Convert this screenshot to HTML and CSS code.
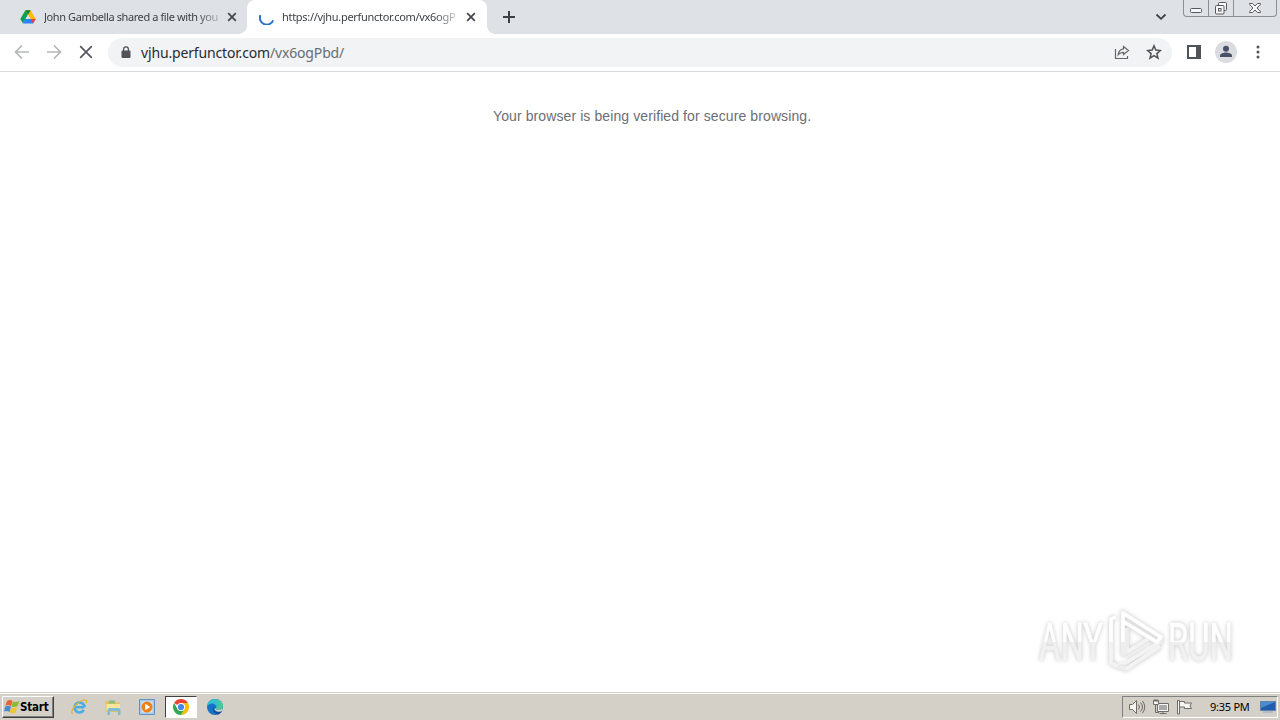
FILE: index.html
```html
<!DOCTYPE html>
<html lang="en">
<head>
<meta charset="utf-8">
<title>Browser window</title>
<link rel="stylesheet" href="styles.css">
</head>
<body>
<div class="desktop">
  <header class="tabstrip">
    <div class="tab">
      <svg class="favicon" width="16" height="16" viewBox="0 0 16 16"><path fill="#0f9d58" d="M5.4 1.3 8 5.8 3 14.5 .3 9.9z"/><path fill="#ffba00" d="M5.4 1.3h5.2l5.1 8.6h-5.2z"/><path fill="#2684fc" d="M5.4 9.9h10.3L13 14.5H3z"/><path fill="#ea4335" d="M10.5 9.9h5.2L13 14.5z"/><path fill="#00832d" d="M5.4 1.3h5.2L8 5.8z"/><path fill="#dee1e6" d="m8 5.800 2.500 4.100h-5z"/></svg>
      <span class="tab-title tab-title-first">John Gambella shared a file with you</span>
      <svg class="close" width="10" height="10" viewBox="0 0 10 10"><path d="m1.2 1.2 7.6 7.6m0-7.6L1.2 8.8"/></svg>
    </div>
    <div class="tab tab-active">
      <svg class="favicon" width="16" height="16" viewBox="0 0 16 16"><path d="M1.4 6.1a6.8 6.8 0 0 0 12.8 5.3" fill="none" stroke="#2b6fc9" stroke-width="2"/></svg>
      <span class="tab-title tab-title-second">https://vjhu.perfunctor.com/vx6ogP</span>
      <svg class="close" width="10" height="10" viewBox="0 0 10 10"><path d="m1.2 1.2 7.6 7.6m0-7.6L1.2 8.8"/></svg>
    </div>
    <svg class="new-tab" width="14" height="14" viewBox="0 0 14 14"><path d="M7 1v12M1 7h12"/></svg>
    <svg class="tab-search" width="12" height="8" viewBox="0 0 12 8"><path d="m1.5 1.5 4.5 4.3 4.5-4.3"/></svg>
    <div class="window-controls">
      <span class="control control-min"><svg width="14" height="16" viewBox="0 0 14 16"><rect x="1.500" y="8.500" width="11" height="4" rx="1"/></svg></span>
      <span class="control control-restore"><svg width="14" height="16" viewBox="0 0 14 16"><path d="M4.500 5V3.500q0-1 1-1h6q1 0 1 1v6q0 1-1 1H10"/><rect x="1.500" y="5.500" width="8.500" height="8.500" rx="1"/><rect x="4.500" y="8.500" width="2.500" height="2.500"/></svg></span>
      <span class="control control-close"><svg width="14" height="16" viewBox="0 0 14 16"><path d="M1.500 3.500h3L7 6l2.500-2.500h3v1L9 8l3.500 3.500v1h-3L7 10l-2.500 2.500h-3v-1L5 8 1.500 4.500z"/></svg></span>
    </div>
  </header>
  <nav class="toolbar">
    <svg class="nav-icon nav-disabled" width="16" height="16" viewBox="0 0 16 16"><path d="M15 8H2M8 1.500 1.500 8 8 14.500"/></svg>
    <svg class="nav-icon nav-disabled" width="16" height="16" viewBox="0 0 16 16"><path d="M1 8h13M8 1.500 14.500 8 8 14.500"/></svg>
    <svg class="nav-icon" width="16" height="16" viewBox="0 0 16 16"><path d="m2.200 2.200 11.600 11.600m0-11.600L2.200 13.800"/></svg>
    <div class="omnibox">
      <svg class="lock" width="10" height="13" viewBox="0 0 10 13"><path d="M2.600 5V3.300a2.400 2.400 0 0 1 4.800 0V5" fill="none" stroke="#505357" stroke-width="1.300"/><rect x=".5" y="4.600" width="9" height="7.400" rx="1" fill="#505357"/></svg>
      <span class="url">vjhu.perfunctor.com<span class="url-path">/vx6ogPbd/</span></span>
      <svg class="share" width="16" height="16" viewBox="0 0 16 16"><path d="M1.500 5v9.500h12V12M9.500 2.500l5 4-5 4V8.300c-2.300 0-4 .6-5.300 2.300.4-3.300 2-5.400 5.300-5.800z"/></svg>
      <svg class="star" width="16" height="16" viewBox="0 0 16 16"><path d="m8 1.800 1.800 4.300 4.600.4-3.500 3.100 1.100 4.600L8 11.700l-4 2.500 1.100-4.600-3.500-3.100 4.600-.4z"/></svg>
    </div>
    <svg class="side-panel" width="14" height="14" viewBox="0 0 14 14"><path d="M1 1h12v12H1z" fill="none" stroke="#505357" stroke-width="2"/><path d="M9 1h4v12H9z" fill="#505357"/></svg>
    <svg class="avatar" width="22" height="22" viewBox="0 0 22 22"><circle cx="11" cy="11" r="11" fill="#dadce0"/><circle cx="11" cy="7.800" r="3" fill="#465067"/><path d="M5 16v-1.500c0-2 3.700-3 6-3s6 1 6 3V16z" fill="#465067"/></svg>
    <svg class="kebab" width="4" height="16" viewBox="0 0 4 16"><circle cx="2" cy="3" r="1.500"/><circle cx="2" cy="8" r="1.500"/><circle cx="2" cy="13" r="1.500"/></svg>
  </nav>
  <main class="page">
    <p class="message">Your browser is being verified for secure browsing.</p>
    <svg class="watermark" width="210" height="76" viewBox="0 0 210 76">
      <defs><linearGradient id="shade" gradientUnits="userSpaceOnUse" x1="0" y1="20" x2="0" y2="60"><stop offset="0" stop-color="#fff"/><stop offset=".54" stop-color="#fefefe"/><stop offset=".55" stop-color="#efefef"/><stop offset="1" stop-color="#f3f3f3"/></linearGradient></defs>
      <g class="mark-text"><text x="11" y="59.500" textLength="64" lengthAdjust="spacingAndGlyphs">ANY</text><text x="140" y="59.500" textLength="65" lengthAdjust="spacingAndGlyphs">RUN</text></g>
      <g class="mark-shadow"><path d="M88 17l-5 2v44l6 3M95 56V13l38 24v5L99 62M96 22l32 20M99 28v24l21-13M89 63v3l9 3 34-22"/></g>
      <path class="mark-line mark-low" d="M83 40v23l6 3M99 52l21-13M90 63l9-1 32-20M98 69l34-23"/>
      <path class="mark-line" d="M88 17l-5 2v23M95 42V13l38 24-4 5-33-20"/>
    </svg>
  </main>
  <footer class="taskbar">
    <div class="start">
      <svg width="17" height="16" viewBox="0 0 17 16"><path fill="#e66532" d="M3 2q3-2 5.500 0L7 7.200Q4 5 1.200 7z"/><path fill="#8db93a" d="M9 2.500q3 1.200 6.500-.6l-1.800 5q-3 2-6.200.5z"/><path fill="#4a8bd0" d="M1 7.800q3-2 6 0L5.500 13q-2.500-2-5.300-.4z"/><path fill="#f3c52f" d="M7.300 8.200q3 1.700 6.200-.3l-2 5.500q-3 1.800-5.800.2z"/></svg>
      <span class="start-label">Start</span>
    </div>
    <div class="launchers">
      <span class="launcher"><svg width="18" height="18" viewBox="0 0 18 18"><path d="M14 9.200H5M13.800 12a5 5 0 1 1 .7-2.500" fill="none" stroke="#49aee2" stroke-width="2.600"/><path d="M2.500 16C-.5 13 8 2.500 15 1.800c2 0 1.800 2 1 3.400" fill="none" stroke="#dfb53c" stroke-width="1.300"/></svg></span>
      <span class="launcher"><svg width="18" height="18" viewBox="0 0 18 18"><path d="M1.500 3h5l1 1.500H16V14H1.500z" fill="#e2c260"/><path d="M2.500 6H16v7H2.500z" fill="#f9e69b"/><path d="M5 2.500h6v3H5z" fill="#8dbc7c"/><path d="M3.500 17v-5q0-2 2-2h9q2 0 2 2v5H14v-4H6v4z" fill="#7dbcd8"/></svg></span>
      <span class="launcher"><svg width="18" height="18" viewBox="0 0 18 18"><path d="M1.500 1.500h15v15h-15z" fill="#a9cae9" stroke="#5c94c8"/><path d="M3.500 3.500h11v11h-11z" fill="#d7e8f7"/><circle cx="9" cy="9" r="5.500" fill="#ee8119"/><path d="m7.200 5.800 5 3.200-5 3.200z" fill="#fff"/></svg></span>
      <span class="launcher launcher-active"><svg width="18" height="18" viewBox="0 0 18 18"><path fill="#ea4335" d="M9 9 2.070 5A8 8 0 0 1 15.930 5H9z"/><path fill="#fbbc04" d="M9 5h6.930A8 8 0 0 1 9 17l3.460-6z"/><path fill="#34a853" d="M9 17A8 8 0 0 1 2.070 5l3.470 6L9 13l3.460-2z"/><circle cx="9" cy="9" r="4" fill="#fff"/><circle cx="9" cy="9" r="3.100" fill="#4285f4"/></svg></span>
      <span class="launcher"><svg width="18" height="18" viewBox="0 0 18 18"><circle cx="9" cy="9" r="8" fill="#1672c5"/><path d="M1 8.500C1.600 3.500 5 1 9 1c5 0 8 3.500 8 7 0 3-2.500 4-4.500 4-3 0-3-1-2.300-2C11 8 9 5.500 6 5.500 3.500 5.500 1.500 7 1 8.500z" fill="#35bfcd"/><path d="M11 1.300c4 .7 6 3.500 6 6.700 0 3-2.500 4-4.500 4-3 0-3-1-2.300-2 2-1 3-5 .8-8.700z" fill="#5fd06f" opacity=".5"/><path d="M8 8c-1 3 1 6 4 6 2 0 3-.5 4.300-1.300-.7 1.500-2.300 3-4.300 3.700C8 16 5.500 12 8 8z" fill="#0b4d99"/><path d="M10 10c-.8 1 0 2 2.500 2 1.900 0 3.300-.8 4-2l-.2 2.700C14 14.500 9 14 8.500 11z" fill="#d4d0c8"/></svg></span>
    </div>
    <div class="tray">
      <svg width="18" height="16" viewBox="0 0 18 16"><path class="tray-fill" d="M1.500 5.500h3l4-4v13l-4-4h-3z"/><path class="tray-line" d="M10.500 5.500q2 2.500 0 5M12.500 3.500q4 4.500 0 9M14.500 2q4.500 6 0 12"/></svg>
      <svg width="18" height="16" viewBox="0 0 18 16"><path class="tray-fill" d="M5.500 4.500h11v8h-11zM7.500 14.500h7"/><path d="M7 6h8v5H7z" fill="#aaa"/><path class="tray-fill" d="M1.500 1.500h5v4h-5z"/><path class="tray-line" d="M3 0v3m2-3v3M3.500 5.500v8H7M11 12.500v2"/></svg>
      <svg width="18" height="16" viewBox="0 0 18 16"><path class="tray-fill" d="M1.500 15V1.500h2V15zM3.500 2.500h5v1.500h7l-1.500 3 1.500 2.500h-7V8h-5z"/></svg>
      <span class="clock">9:35 PM</span>
      <svg class="show-desktop" width="16" height="14" viewBox="0 0 16 14"><path d="M.5 1.500h15v9H.5z" fill="#225cae" stroke="#6085aa"/><path d="M1 2h14L1 8z" fill="#4b8bd1"/><path d="M3 12h10" stroke="#8fa9c4" stroke-width="1"/></svg>
    </div>
  </footer>
</div>
</body>
</html>
```
FILE: styles.css
```css
* { box-sizing: border-box; }
body { margin: 0; overflow: hidden; background: #fff; }
svg { display: block; flex: none; }
.desktop { width: 1280px; height: 720px; display: flex; flex-direction: column; font-family: "Noto Sans", sans-serif; }
.tabstrip { height: 34px; flex: none; display: flex; align-items: flex-start; background: #dee1e6; }
.tab { height: 34px; width: 247px; flex: none; display: flex; align-items: center; padding: 0 10px 0 20px; }
.tab-active { width: 240px; padding: 0 11px 0 12px; background: #fff; border-radius: 8px 8px 0 0; position: relative; }
.tab-active::before, .tab-active::after { content: ""; position: absolute; bottom: 0; width: 8px; height: 8px; }
.tab-active::before { left: -8px; background: radial-gradient(circle at 0 0, transparent 7.500px, #fff 8px); }
.tab-active::after { right: -8px; background: radial-gradient(circle at 100% 0, transparent 7.500px, #fff 8px); }
.tab-title { flex: none; width: 175px; margin: 0 8px; white-space: nowrap; font-size: 11px; line-height: 18px; color: #3c3f44; -webkit-mask-image: linear-gradient(90deg, #000 87%, rgba(0,0,0,.25)); mask-image: linear-gradient(90deg, #000 87%, rgba(0,0,0,.25)); }
.tab-title-first { letter-spacing: -.4px; }
.tab-title-second { margin: 0 9px 0 7px; letter-spacing: -.3px; }
.close { fill: none; stroke: #46494d; stroke-width: 1.800; }
.new-tab { margin: 10px 0 0 15px; fill: none; stroke: #3c4043; stroke-width: 2; }
.tab-search { margin: 13px 16px 0 auto; fill: none; stroke: #3c4043; stroke-width: 1.800; }
.window-controls { height: 17px; width: 94px; display: flex; margin-right: 3px; border: 1px solid #8b8e93; border-top: 0; border-radius: 0 0 4px 4px; }
.control { display: flex; justify-content: center; border-right: 1px solid #8b8e93; }
.control svg { fill: #f7f7f8; stroke: #55585d; stroke-width: 1; }
.control-min { width: 25px; }
.control-restore { width: 25px; }
.control-close { flex: 1; border: 0; }
.toolbar { height: 38px; flex: none; display: flex; align-items: center; padding: 0 20px 2px 14px; border-bottom: 1px solid #d9dbde; background: #fff; }
.nav-icon { margin-right: 16px; fill: none; stroke: #53565a; stroke-width: 1.700; }
.nav-disabled { stroke: #b5b6b8; }
.omnibox { width: 1064px; height: 29px; margin: 1px 15px 0 -2px; display: flex; align-items: center; padding: 0 10px 0 13px; border-radius: 15px; background: #f1f3f4; }
.url { margin: 1px auto 0 10px; font-size: 14px; line-height: 20px; letter-spacing: -.16px; color: #292b2e; white-space: nowrap; }
.url-path { color: #696d72; }
.share { margin-right: 16px; fill: none; stroke: #62656a; stroke-width: 1.200; }
.star { fill: none; stroke: #4f5256; stroke-width: 1.500; }
.avatar { margin-left: 14px; }
.kebab { margin-left: 19px; fill: #505357; }
.page { flex: 1; display: flex; flex-direction: column; justify-content: space-between; }
.message { width: 320px; margin: 34px 0 0 493px; font: 14px/20px "Liberation Sans", sans-serif; letter-spacing: .1px; color: #6b6e73; white-space: nowrap; }
.watermark { margin: 0 42px 16px auto; overflow: visible; }
.mark-text { font: 400 52px Roboto, sans-serif; fill: url(#shade); stroke: url(#shade); stroke-width: .6px; filter: drop-shadow(0 0 2px #c4c4c4); }
.mark-shadow { fill: none; stroke: #ededed; stroke-width: 4; filter: drop-shadow(0 0 2px #c4c4c4); }
.mark-line { fill: none; stroke: #fff; stroke-width: 3.500; stroke-linejoin: round; }
.mark-low { stroke: #f3f3f3; }
.taskbar { height: 28px; flex: none; display: flex; align-items: center; padding: 2px 2px 2px; border-top: 1px solid #d4d0c8; box-shadow: inset 0 1px #fff; background: #d4d0c8; }
.start { width: 52px; height: 22px; display: flex; align-items: center; padding-left: 1px; border: 1px solid; border-color: #fff #404040 #404040 #fff; box-shadow: inset -1px -1px #808080; }
.start-label { font: bold 11.500px "DejaVu Sans Condensed", sans-serif; letter-spacing: -.2px; margin-left: -1px; color: #000; }
.launchers { display: flex; gap: 2px; margin-left: 9px; }
.launcher { width: 32px; height: 22px; display: flex; align-items: center; justify-content: center; }
.launcher-active { background: #fff; border: 1px solid; border-color: #404040 #fff #fff #404040; }
.tray { width: 156px; height: 22px; margin-left: auto; display: flex; align-items: center; padding: 0 1px 0 5px; gap: 6px; border: 1px solid; border-color: #808080 #fff #fff #808080; }
.tray-fill { fill: #f6f5f2; stroke: #6e6c68; }
.tray-line { fill: none; stroke: #6e6c68; }
.clock { margin-left: 10px; width: 42px; font-size: 11px; color: #000; white-space: nowrap; letter-spacing: -.25px; }
.show-desktop { margin-left: auto; }
```
